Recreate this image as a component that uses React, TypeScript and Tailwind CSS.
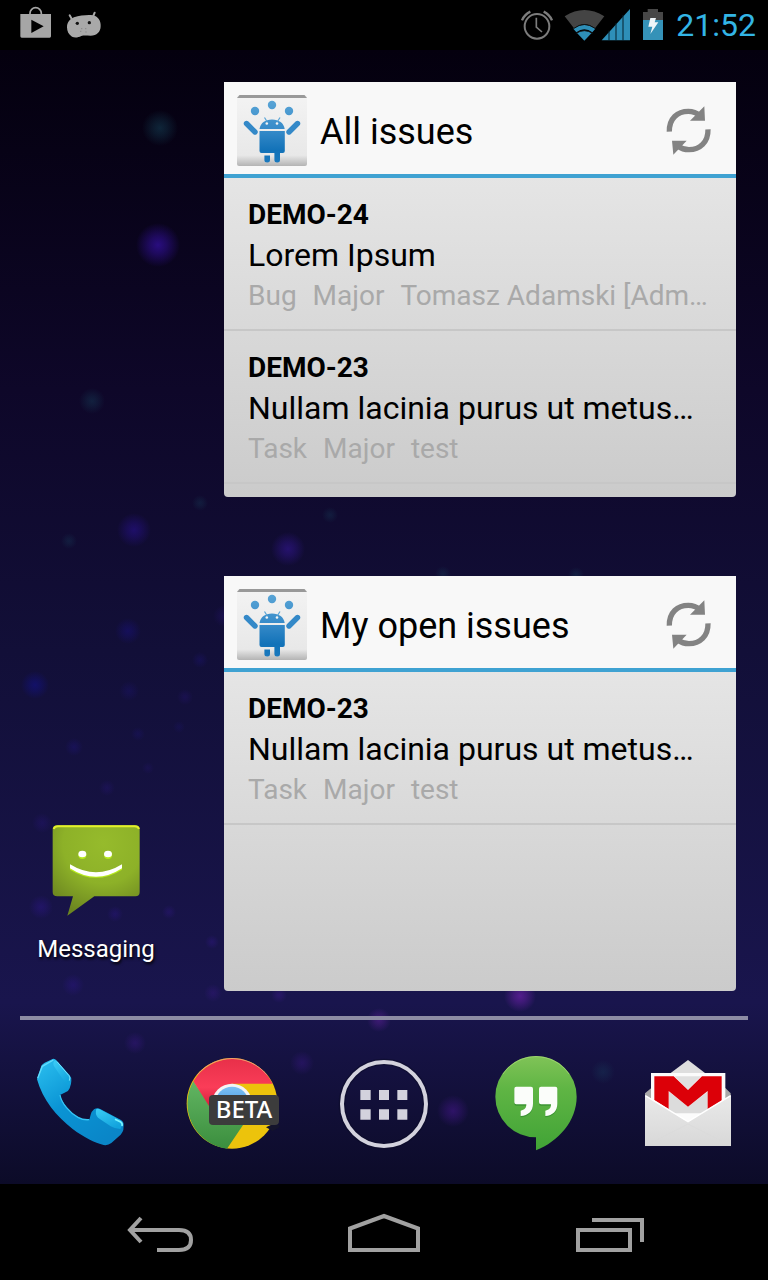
import React from "react";

type Issue = { id: string; summary: string; meta: string[] };

const lorem: Issue = {
  id: "DEMO-24",
  summary: "Lorem Ipsum",
  meta: ["Bug", "Major", "Tomasz Adamski [Adm…"],
};

const nullam: Issue = {
  id: "DEMO-23",
  summary: "Nullam lacinia purus ut metus…",
  meta: ["Task", "Major", "test"],
};

const lights: [number, number, number, string, number][] = [
  [160, 78, 18, "#1b5a70", 0.4],
  [158, 195, 22, "#3a12b4", 0.65],
  [92, 351, 13, "#1b5a70", 0.3],
  [134, 480, 17, "#2c12a0", 0.5],
  [288, 499, 17, "#3a18a8", 0.5],
  [200, 453, 8, "#1b5a70", 0.22],
  [330, 465, 8, "#1b5a70", 0.22],
  [69, 491, 8, "#1b5a70", 0.22],
  [443, 524, 8, "#1b5a70", 0.22],
  [576, 525, 8, "#1b5a70", 0.25],
  [128, 581, 13, "#1c129c", 0.35],
  [224, 566, 11, "#3416a0", 0.22],
  [35, 635, 14, "#1212a0", 0.45],
  [129, 641, 10, "#2416a0", 0.2],
  [200, 610, 8, "#2416a0", 0.22],
  [185, 647, 8, "#3416a0", 0.2],
  [138, 684, 7, "#2416a0", 0.18],
  [179, 677, 6, "#2416a0", 0.15],
  [74, 697, 9, "#2416a0", 0.25],
  [148, 718, 6, "#3416a0", 0.15],
  [107, 738, 8, "#3416a0", 0.2],
  [42, 773, 10, "#3416a0", 0.22],
  [41, 857, 12, "#3416a0", 0.35],
  [115, 864, 8, "#3416a0", 0.28],
  [169, 862, 7, "#3c18a4", 0.25],
  [212, 892, 7, "#3c18a4", 0.28],
  [73, 935, 11, "#3416a0", 0.3],
  [213, 943, 9, "#4a1aa4", 0.25],
  [279, 945, 8, "#4a1aa4", 0.3],
  [520, 946, 16, "#7a22b8", 0.6],
  [379, 970, 12, "#6a22a8", 0.45],
  [135, 993, 11, "#4a1aa4", 0.3],
  [302, 1013, 12, "#4a1aa4", 0.3],
  [603, 1022, 12, "#1b5a70", 0.22],
  [453, 1061, 16, "#5a1ab0", 0.4],
];

function Wallpaper() {
  return (
    <svg
      className="absolute inset-0 h-full w-full"
      viewBox="0 0 768 1134"
      preserveAspectRatio="xMidYMin slice"
      aria-hidden="true"
    >
      <defs>
        {lights.map(([, , , color], i) => (
          <radialGradient id={`light${i}`} key={i}>
            <stop offset="0" stopColor={color} />
            <stop offset="0.4" stopColor={color} stopOpacity="0.65" />
            <stop offset="1" stopColor={color} stopOpacity="0" />
          </radialGradient>
        ))}
      </defs>
      {lights.map(([x, y, r, , opacity], i) => (
        <circle key={i} cx={x} cy={y} r={r} fill={`url(#light${i})`} opacity={opacity} />
      ))}
    </svg>
  );
}

function StatusBar() {
  return (
    <header className="flex h-[50px] items-center justify-between bg-black pr-3 pl-5">
      <div className="flex gap-[14px]">
        <svg className="h-[50px] w-8" viewBox="60 0 96 150" role="img" aria-label="Play Store">
          <path d="M90 44V40a17 17 0 0 1 34 0v4" fill="none" stroke="#a6a6a6" strokeWidth="5" />
          <path d="M61 42H153V109q0 4-4 4H65q-4 0-4-4ZM94 59V99L131 79Z" fill="#a6a6a6" fillRule="evenodd" />
        </svg>
        <svg className="h-[50px] w-9" viewBox="198 0 108 150" role="img" aria-label="Android">
          <path d="M209 46L217 60M284 38L278 52" stroke="#a9a9a9" strokeWidth="6" strokeLinecap="round" />
          <path
            d="M201 82C201 66 210 57 222 52C240 47 262 44 278 46C294 49 303 62 302 78C302 96 290 107 272 107C260 107 252 105 244 108C234 113 224 114 216 110C206 104 201 94 201 82Z"
            fill="#a9a9a9"
          />
          <circle cx="232" cy="70" r="5" fill="#111" />
          <circle cx="268" cy="68" r="5" fill="#111" />
          <path d="M243 86h4m8 0h4M240 94h4m12 2h4" stroke="#888" strokeWidth="3" />
        </svg>
      </div>
      <div className="flex items-center gap-[11px]">
        <svg className="h-[50px] w-8" viewBox="39 0 96 150" role="img" aria-label="Alarm set">
          <g fill="none" stroke="#7c7c7c">
            <circle cx="87" cy="79" r="37" strokeWidth="6" />
            <path d="M85 53V81L102 96" strokeWidth="5" />
            <path d="M42 61Q49 44 67 35M132 61Q125 44 107 35" strokeWidth="7" />
          </g>
        </svg>
        <svg className="h-[50px] w-[67px]" viewBox="168 0 201 150" role="img" aria-label="Wi-Fi and signal strength">
          <path d="M170 49Q229 11 289 49L261 85Q229 61 198 85Z" fill="#444" />
          <path d="M196 86Q229 62 262 86L253 97Q229 79 205 97Z" fill="#2e8fb8" />
          <path d="M207 99Q229 85 251 99L229 122Z" fill="#2e8fb8" />
          <path d="M198 85Q229 62 261 85M204 100Q229 84 254 100" fill="none" stroke="#111" strokeWidth="3" />
          <path d="M281 121L366 27V121Z" fill="#2e8fb8" />
          <path d="M303 92V122M324 69V122M345 45V122" stroke="#05202c" strokeWidth="3" />
        </svg>
        <svg className="h-[50px] w-[22px]" viewBox="399 0 66 150" role="img" aria-label="Battery charging">
          <path d="M402 60V36H416V27H447V36H462V60Z" fill="#474747" />
          <path d="M402 60H462V120H402Z" fill="#3592b8" />
          <path d="M424 54H441L437 67H448L424 102L430 80H418Z" fill="#eef5f8" />
        </svg>
        <time className="ml-px text-[32px] leading-[50px] text-[#33b5e5]">21:52</time>
      </div>
    </header>
  );
}

function JugglerIcon() {
  return (
    <svg className="h-[71px] w-[70px] shrink-0" viewBox="0 0 70 71" aria-hidden="true">
      <defs>
        <linearGradient id="tile" x1="0" y1="0" x2="0" y2="1">
          <stop offset="0" stopColor="#f3f3f3" />
          <stop offset="0.85" stopColor="#e8e8e8" />
          <stop offset="1" stopColor="#b4b4b4" />
        </linearGradient>
        <linearGradient id="robot" gradientUnits="userSpaceOnUse" x1="0" y1="5" x2="0" y2="68">
          <stop offset="0" stopColor="#5aa5d6" />
          <stop offset="0.5" stopColor="#3489c8" />
          <stop offset="0.8" stopColor="#1272b8" />
          <stop offset="1" stopColor="#1a79be" />
        </linearGradient>
      </defs>
      <rect y="0" width="70" height="71" rx="2" fill="url(#tile)" />
      <path d="M2.500 0H67.500L70 3H0Z" fill="#999" />
      <g fill="url(#robot)">
        <circle cx="18" cy="16" r="4.200" />
        <circle cx="35" cy="10" r="4.200" />
        <circle cx="52" cy="16" r="4.200" />
        <path d="M22.500 34C23.500 28 28 24.500 35 24.500S46.700 28 47.700 34Z" />
        <path d="M22.500 36H47.800V56q0 2-2 2H43V65q0 2.500-2.800 2.500T37.400 65V58H24.500q-2 0-2-2Z" />
        <path d="M27.400 60.500H33V65q0 2.500-2.800 2.500T27.400 65Z" />
      </g>
      <path d="M9.500 28.500L18 37M60.500 28.500L52 37" stroke="#3489c8" strokeWidth="5.400" strokeLinecap="round" />
      <path d="M27.500 22.500L30 26.500M43 22.500L40.500 26.500" stroke="#5aa5d6" strokeWidth="1.200" />
      <circle cx="29.800" cy="28.500" r="1.300" fill="#f4f4f4" />
      <circle cx="40" cy="28.500" r="1.300" fill="#f4f4f4" />
    </svg>
  );
}

function RefreshIcon() {
  return (
    <svg className="h-[50px] w-12" viewBox="75 85 144 150" aria-hidden="true">
      <g fill="none" stroke="#838383" strokeWidth="16">
        <path d="M88 165C87 125 113 104 145 104Q165 104 180 117" />
        <path d="M204 158C205 197 179 219 147 219Q128 219 113 208" />
      </g>
      <path d="M193 89L195 132H150ZM96 192H140L100 234Z" fill="#838383" />
    </svg>
  );
}

function Widget({ title, issues }: { title: string; issues: Issue[] }) {
  return (
    <article className="flex min-h-[415px] flex-col overflow-hidden rounded-b">
      <header className="flex h-24 items-center border-b-4 border-[#3fa2d2] bg-[#f8f8f8] pt-1 pr-[23px] pl-[13px]">
        <JugglerIcon />
        <h2 className="ml-[13px] flex-1 truncate pt-1 text-4xl leading-[48px] text-black">{title}</h2>
        <button type="button" aria-label={`Refresh ${title}`} className="shrink-0">
          <RefreshIcon />
        </button>
      </header>
      <ul className="flex-1 bg-linear-to-b from-[#e5e5e5] to-[#cbcbcb]">
        {issues.map((issue) => (
          <li key={issue.id} className="border-b-2 border-[#c7c7c7] px-6 pt-[17px] pb-3">
            <h3 className="text-[28px] leading-10 font-bold text-black">{issue.id}</h3>
            <p className="truncate text-[32px] leading-10 text-black">{issue.summary}</p>
            <p className="flex gap-4 text-[28px] leading-[42px] text-[#a9a9a9]">
              {issue.meta.map((m) => (
                <span key={m} className="shrink-0">
                  {m}
                </span>
              ))}
            </p>
          </li>
        ))}
      </ul>
    </article>
  );
}

function MessagingIcon() {
  return (
    <svg className="size-24" viewBox="84 30 288 288" aria-hidden="true">
      <defs>
        <radialGradient id="bubble" gradientUnits="userSpaceOnUse" cx="250" cy="100" r="220">
          <stop offset="0" stopColor="#96bb2c" />
          <stop offset="0.55" stopColor="#8db128" />
          <stop offset="1" stopColor="#6c8620" />
        </radialGradient>
      </defs>
      <path
        d="M112 46H346q13 0 13 13V246q0 13-13 13H223L142 317L159 259H112q-14 0-14-13V59q0-13 14-13Z"
        fill="url(#bubble)"
      />
      <path d="M101 57q3-8 13-8H344q10 0 13 8" fill="none" stroke="#e3f02c" strokeWidth="6" />
      <g fill="#b6ea1c">
        <ellipse cx="187" cy="136" rx="12" ry="11" />
        <ellipse cx="264" cy="136" rx="12" ry="11" />
        <path d="M150 168Q228 215 306 168V179Q228 228 150 179Z" />
      </g>
      <g fill="#fff">
        <ellipse cx="187" cy="132" rx="12" ry="10" />
        <ellipse cx="264" cy="132" rx="12" ry="10" />
        <path d="M150 163Q228 211 306 163V175Q228 226 150 175Z" />
      </g>
    </svg>
  );
}

const dockIcon = "size-[120px]";

function PhoneIcon() {
  return (
    <svg className={dockIcon} viewBox="0 0 360 360" aria-hidden="true">
      <defs>
        <linearGradient id="phone" x1="0" y1="0" x2="0.7" y2="1">
          <stop offset="0" stopColor="#2cc0f0" />
          <stop offset="0.5" stopColor="#0a94d4" />
          <stop offset="1" stopColor="#0a86c8" />
        </linearGradient>
        <linearGradient id="phoneCap" x1="0" y1="0" x2="0.6" y2="1">
          <stop offset="0" stopColor="#3ccdf6" />
          <stop offset="1" stopColor="#12a3dd" />
        </linearGradient>
      </defs>
      <path
        d="M51 118L64 77Q67 72 74 68L98 57Q104 55 109 61L149 106Q155 113 154 122Q154 132 149 145Q146 153 138 156L120 165C124 184 147 214 170 229Q188 242 208 239L212 224Q215 214 222 208Q232 202 242 208L303 240Q312 246 311 256L310 270Q308 277 302 284L274 309Q264 317 251 315C225 309 190 291 158 267C110 230 68 180 51 118Z"
        fill="url(#phone)"
      />
      <path d="M103 62Q108 60 111 65L147 107Q152 113 150 122L146 136Q138 132 133 124L103 80Q97 70 103 62Z" fill="url(#phoneCap)" />
      <path d="M111 65L147 107Q152 113 148 122" fill="none" stroke="#77e4ff" strokeWidth="3" />
      <path d="M229 207Q235 204 242 209L302 241Q309 247 307 256L301 267Q285 267 272 259L234 233Q224 222 229 207Z" fill="url(#phoneCap)" />
      <path d="M285 238L302 246Q308 250 306 258" fill="none" stroke="#78f4ff" strokeWidth="5" />
      <path d="M120 165C124 190 150 219 174 232Q190 241 208 239" fill="none" stroke="#36c4f4" strokeWidth="4" />
      <path d="M53 115L67 79L100 60" fill="none" stroke="#63dcfb" strokeWidth="4" />
    </svg>
  );
}

function ChromeIcon() {
  return (
    <span className="relative block">
      <svg className={dockIcon} viewBox="6 0 360 360" aria-hidden="true">
        <defs>
          <linearGradient id="cRed" x1="0" y1="0" x2="0" y2="1">
            <stop offset="0" stopColor="#e8304a" />
            <stop offset="0.6" stopColor="#fa3d58" />
            <stop offset="1" stopColor="#d81f3c" />
          </linearGradient>
          <linearGradient id="cGreen" x1="0" y1="0" x2="0" y2="1">
            <stop offset="0" stopColor="#62b562" />
            <stop offset="1" stopColor="#3b8e3e" />
          </linearGradient>
          <linearGradient id="cBlue" x1="0" y1="0" x2="0" y2="1">
            <stop offset="0" stopColor="#7cc0f4" />
            <stop offset="1" stopColor="#2a7fd0" />
          </linearGradient>
        </defs>
        <circle cx="186" cy="190" r="136" fill="#ecc30c" />
        <path d="M70 124A136 136 0 0 0 171 326L246 215L120 198Z" fill="url(#cGreen)" />
        <path d="M70 124A136 136 0 0 1 308 131H186L117 198Z" fill="url(#cRed)" />
        <circle cx="186" cy="191" r="60" fill="#f4f4f4" />
        <circle cx="186" cy="190" r="50" fill="url(#cBlue)" />
        <path d="M82 104A136 136 0 0 1 290 104" fill="none" stroke="#f58a98" strokeWidth="3" opacity="0.7" />
        <path d="M302 255L328 255V262L308 273L288 262Z" fill="#14142c" />
      </svg>
      <span className="absolute top-[55px] left-[37px] h-[30px] w-[70px] rounded-sm bg-[#3c3c3c] text-center font-['Noto_Sans'] text-2xl leading-[27px] font-medium text-white">
        BETA
      </span>
    </span>
  );
}

function AppsIcon() {
  return (
    <svg className={dockIcon} viewBox="0 0 360 360" aria-hidden="true">
      <circle cx="180" cy="192" r="126" fill="none" stroke="#0b0b28" strokeWidth="20" opacity="0.5" />
      <circle cx="180" cy="192" r="126" fill="none" stroke="#d3d2dd" strokeWidth="12" />
      <path
        d="M109 150h31v30h-31zM165 150h30v30h-30zM220 150h30v30h-30zM109 208h31v31h-31zM165 208h30v31h-30zM220 208h30v31h-30z"
        fill="#d3d2dd"
      />
    </svg>
  );
}

function HangoutsIcon() {
  return (
    <svg className={dockIcon} viewBox="-12 0 360 360" aria-hidden="true">
      <defs>
        <linearGradient id="hang" x1="0" y1="0" x2="0" y2="1">
          <stop offset="0" stopColor="#80c357" />
          <stop offset="0.35" stopColor="#5fb544" />
          <stop offset="1" stopColor="#41a336" />
        </linearGradient>
      </defs>
      <path
        d="M168 48A122 122 0 0 1 290 170C290 242 236 304 168 331V292A122 122 0 0 1 46 170A122 122 0 0 1 168 48Z"
        fill="url(#hang)"
      />
      <path d="M69 102A120 120 0 0 1 267 102" fill="none" stroke="#a9dc78" strokeWidth="3" opacity="0.7" />
      <g fill="#3c9433" transform="translate(0 4)">
        <path d="M109 140H153q6 0 6 6V191C159 213 145 226 122 228V212C134 210 139 204 139 193H109q-6 0-6-6V146q0-6 6-6Z" />
        <path d="M183 140H226q6 0 6 6V191C232 213 218 226 196 228V212C208 210 213 204 213 193H183q-6 0-6-6V146q0-6 6-6Z" />
      </g>
      <g fill="#fbfdfa">
        <path d="M109 140H153q6 0 6 6V191C159 213 145 226 122 228V212C134 210 139 204 139 193H109q-6 0-6-6V146q0-6 6-6Z" />
        <path d="M183 140H226q6 0 6 6V191C232 213 218 226 196 228V212C208 210 213 204 213 193H183q-6 0-6-6V146q0-6 6-6Z" />
      </g>
    </svg>
  );
}

function GmailIcon() {
  return (
    <svg className={dockIcon} viewBox="-6 0 360 360" aria-hidden="true">
      <defs>
        <linearGradient id="mail" x1="0" y1="0" x2="0" y2="1">
          <stop offset="0" stopColor="#e9e9e9" />
          <stop offset="1" stopColor="#d8d8d8" />
        </linearGradient>
      </defs>
      <path d="M45 168V160L64 144H286L302 160V168L286 200H64Z" fill="#a8a8a8" />
      <path d="M174 60L226 100H121Z" fill="#dedede" />
      <path d="M63 99H286V190L174 260L63 190Z" fill="#fbfbfb" />
      <path d="M117 155V220H233V155L174 200Z" fill="#dcdcdc" />
      <path d="M134 109H213L174 149Z" fill="#e0e0e0" />
      <path d="M73 109H131L174 150L216 109H275V182L233 208V153L174 200L116 153V207L73 180Z" fill="#dc0008" />
      <path d="M45 166L174 246L303 166V318H45Z" fill="url(#mail)" />
      <path d="M46 167L174 245L302 167" fill="none" stroke="#fff" strokeWidth="4" />
      <path d="M46 317L174 252L302 317" fill="none" stroke="#d9d9d9" strokeWidth="2" />
    </svg>
  );
}

const dock = [
  { label: "Phone", icon: <PhoneIcon /> },
  { label: "Chrome Beta", icon: <ChromeIcon /> },
  { label: "Apps", icon: <AppsIcon /> },
  { label: "Hangouts", icon: <HangoutsIcon /> },
  { label: "Gmail", icon: <GmailIcon /> },
];

const navigation = [
  { label: "Back", d: "M29 34L18 46L29 58M18 46H67Q79 46 79 56Q79 66 67 66H45" },
  { label: "Home", d: "M14 66V44.500L48 32L82 44.500V66Z" },
  { label: "Recent apps", d: "M18 46H70V66H18ZM32 36H82V58" },
];

export default function App() {
  return (
    <div className="flex min-h-screen flex-col bg-black font-[Roboto,sans-serif]">
      <StatusBar />
      <div className="relative flex flex-1 flex-col bg-[linear-gradient(#04000e,#0e0729_30%,#120f38_53%,#19154d_84%,#0c0b28)]">
        <Wallpaper />
        <main className="relative flex flex-1">
          <div className="flex w-48 shrink-0 flex-col items-center justify-end pb-[53px]">
            <button type="button" className="flex flex-col items-center gap-[19px]">
              <MessagingIcon />
              <span className="text-2xl leading-7 text-white [text-shadow:1px_2px_3px_#000]">Messaging</span>
            </button>
          </div>
          <section className="mx-8 flex min-w-0 flex-1 flex-col gap-[79px] pt-8 pb-[25px]">
            <Widget title="All issues" issues={[lorem, nullam]} />
            <Widget title="My open issues" issues={[nullam]} />
          </section>
        </main>
        <hr className="relative mx-5 h-1 border-0 bg-[#8d8ca4]" />
        <footer className="relative grid h-[164px] grid-cols-5 justify-items-center px-1 pt-5">
          {dock.map(({ label, icon }) => (
            <button key={label} type="button" aria-label={label} className="size-[120px]">
              {icon}
            </button>
          ))}
        </footer>
      </div>
      <nav className="grid h-24 grid-cols-3 justify-items-center bg-black px-12">
        {navigation.map(({ label, d }) => (
          <button key={label} type="button" aria-label={label} className="size-24">
            <svg className="size-24" viewBox="0 0 96 96" fill="none" stroke="#a1a1a1" strokeWidth="4">
              <path d={d} />
            </svg>
          </button>
        ))}
      </nav>
    </div>
  );
}
